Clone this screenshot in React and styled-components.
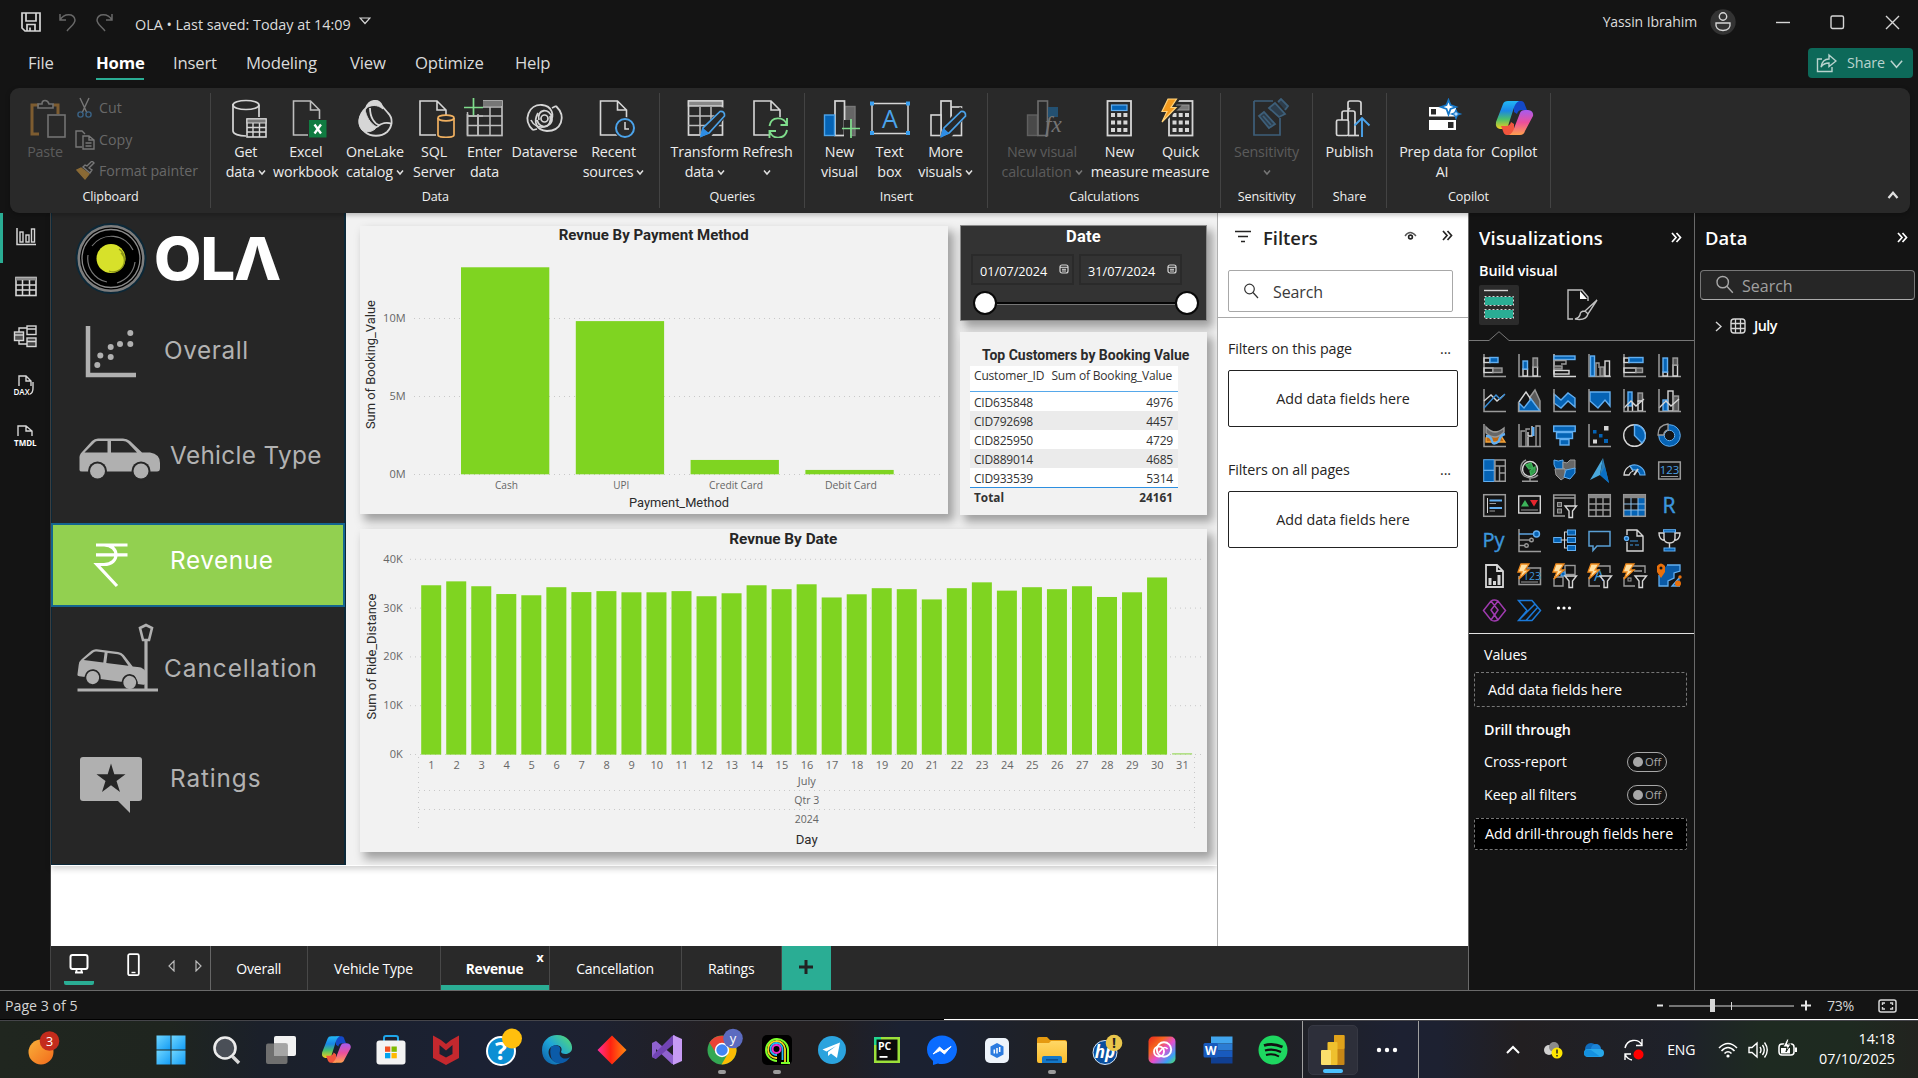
import React from 'react';
import styled, { createGlobalStyle, css } from 'styled-components';

const UI = '"Open Sans", "Noto Sans", sans-serif';
const DIN = 'Roboto, "Open Sans", sans-serif';
const TEAL = '#2aad94';

const Global = createGlobalStyle`
  * { box-sizing: border-box; }
  body { margin: 0; background: #141414; overflow: hidden; }
  svg { display: block; flex: none; }
`;

/* ---------- drawing helpers ---------- */
const R = (x, y, w, h, f = 'none', s = 'none', sw = 1.4, rx = 0) => (
  <rect x={x} y={y} width={w} height={h} fill={f} stroke={s} strokeWidth={sw} rx={rx} />
);
const P = (d, s = '#d0d0d0', f = 'none', sw = 1.4) => <path d={d} stroke={s} fill={f} strokeWidth={sw} />;
const C = (x, y, r, f = 'none', s = 'none', sw = 1.4) => <circle cx={x} cy={y} r={r} fill={f} stroke={s} strokeWidth={sw} />;
const T = (x, y, t, f, size, extra = {}) => (
  <text x={x} y={y} fill={f} fontSize={size} fontFamily={UI} {...extra}>{t}</text>
);

const W = '#d6d6d6';
const G = '#9a9a9a';
const B = '#0563b5';
const LB = '#62aef0';
const OR = '#f2a33a';

/* ---------- shell ---------- */
const Screen = styled.div`
  width: 1918px; height: 1078px; background: #141414; color: #e8e8e8;
  font: 14.3px/20px ${UI}; display: flex; flex-direction: column; overflow: hidden; white-space: nowrap;
`;
const TitleBar = styled.div`
  height: 44px; flex: none; display: flex; align-items: center; padding: 0 18px 0 21px; color: #dcdcdc;
`;
const QuickIcons = styled.div`display: flex; gap: 18px; width: 114px; padding-bottom: 1px;`;
const FileName = styled.div`font-size: 14.4px; letter-spacing: -0.02px; padding-top: 6px; margin-right: 8px;`;
const TitleSpacer = styled.div`flex: 1;`;
const UserName = styled.div`font-size: 14px; margin-right: 13px; letter-spacing: -0.1px;`;
const WindowButtons = styled.div`display: flex; gap: 40px; margin-left: 40px;`;

const MenuBar = styled.div`
  height: 44px; flex: none; display: flex; align-items: flex-start; padding: 4px 5px 0 28px;
`;
const MenuItem = styled.div`
  width: ${p => p.$w}px; margin-right: ${p => p.$gap}px; height: 32px; line-height: 30px; font-size: 16.7px;
  letter-spacing: -0.2px; color: ${p => (p.$on ? '#fff' : '#dadada')}; font-weight: ${p => (p.$on ? 700 : 400)};
  border-bottom: 2px solid ${p => (p.$on ? TEAL : 'transparent')};
`;
const ShareButton = styled.div`
  margin-left: auto; width: 105px; height: 30px; border-radius: 4px; background: #0d6959; color: #b9d3ce;
  display: flex; align-items: center; padding: 0 9px 0 8px; font-size: 14.3px; gap: 10px;
  svg + span { flex: 1; letter-spacing: -.1px; }
  span + svg { margin-left: -10px; }
`;

/* ---------- ribbon ---------- */
const Ribbon = styled.div`
  height: 125px; flex: none; margin: 0 8px 0 10px; background: #292929; border-radius: 9px; display: flex;
  position: relative; z-index: 2; box-shadow: 0 2px 5px rgba(0,0,0,.25);
`;
const Group = styled.div`
  width: ${p => p.$w}px; display: flex; flex-direction: column; padding-top: 10px; align-items: center; position: relative;
  &::after { content: ''; position: absolute; right: 0; top: 5px; height: 115px; width: 1px; background: #434343; }
`;
const GroupRow = styled.div`display: flex; align-self: stretch; padding-left: ${p => p.$pl || 0}px; height: 88px;`;
const GroupLabel = styled.div`font-size: 12.6px; line-height: 22px; color: #f0f0f0; letter-spacing: -0.1px;`;
const RibbonButton = styled.div`
  width: ${p => p.$w}px; display: flex; flex-direction: column; align-items: center; opacity: ${p => (p.$dim ? 0.42 : 1)};
  color: ${p => (p.$dim ? '#a0a0a0' : '#ececec')};
`;
const ButtonText = styled.div`
  margin-top: 4px; font-size: 14.3px; line-height: 20px; text-align: center; white-space: pre;
  display: flex; flex-direction: column; align-items: center; letter-spacing: -0.15px;
`;
const Line = styled.span`display: inline-flex; align-items: center; gap: 3px; height: 20px;`;
const ClipList = styled.div`display: flex; flex-direction: column; margin-left: 8px;`;
const ClipItem = styled.div`
  display: flex; align-items: center; gap: 4px; height: 32.5px; color: #686868; font-size: 14.2px;
  margin-top: ${p => p.$mt || 0}px;
`;
const Collapse = styled.div`margin-left: auto; align-self: flex-end; padding: 0 11px 12px 0;`;

const Caret = ({ c = '#e0e0e0', s = 8, up }) => (
  <svg width={s} height={s} viewBox="0 0 8 8">{P(up ? 'M1 6L4 2.5L7 6' : 'M1 2.5L4 6L7 2.5', c, 'none', s > 12 ? 0.8 : 1.5)}</svg>
);

const doc = (x, c = W) => P(`M${x} 3H${x + 17}L${x + 26} 12V37H${x}ZM${x + 17} 3V12H${x + 26}`, c, 'none', 1.6);

const icons = {
  get: <>{P('M9 6V33C9 36 15 38 22 38', W, 'none', 1.7)}<ellipse cx="22" cy="7" rx="13" ry="4.5" fill="none" stroke={W} strokeWidth="1.7" />{P('M35 7V19', W, 'none', 1.7)}{R(23, 21, 19, 18, '#292929', W, 1.6)}{R(23, 21, 19, 4, '#777', W, 1)}{P('M23 29.5H42M23 34H42M29 25V39M35.5 25V39', W, 'none', 1.4)}</>,
  excel: <>{doc(9.5, '#bdbdbd')}{R(24, 21, 19, 19, '#292929')}{R(25, 22, 17.5, 17.5, '#107c41')}{P('M30.5 26.5L37 35.5M37 26.5L30.5 35.5', '#fff', 'none', 2.3)}</>,
  lake: <>{P('M13 10C16 2 26 0 29 8L35 15C40 20 40 28 34 34C28 39 18 39 12 34C4 28 5 17 13 10Z', W, 'none', 1.8)}{P('M13 10C16 2 26 0 29 8L30 11C24 6 18 7 13 10Z', W, W, 1)}{P('M12 11C5 18 4 26 9 32C14 35 20 34 24 29C17 26 13 18 12 11Z', W, W, 1)}{P('M17 10C17 20 22 26 26 27M24 29C28 25 34 24 39 26', W, 'none', 1.8)}</>,
  sql: <>{doc(8)}{R(24, 17, 20, 23, '#292929')}{P('M26 20V37C26 40 42 40 42 37V20', '#f0b060', 'none', 1.7)}<ellipse cx="34" cy="20" rx="8" ry="2.8" fill="none" stroke="#f0b060" strokeWidth="1.7" /></>,
  enter: <>{R(4.5, 3, 34.5, 34.5, 'none', '#bdbdbd', 1.7)}{R(19, 3, 20, 5, '#777')}{P('M5 18H39M5 27.5H39M15 12V37M27 9V37M18 9H39', '#bdbdbd', 'none', 1.5)}{R(1, 0, 19, 16, '#292929', 'none')}{P('M10.5 0V19M1 9.5H20', '#7fdc8c', 'none', 1.7)}{P('M4.5 14V37M15 18V37M4.5 18H20', '#bdbdbd', 'none', 1.5)}</>,
  dv: <>{P('M16 22C13 11 27 9 29 20C30 30 13 33 8 22M10 32C-1 22 6 6 19 7C29 8 32 17 27 24', W, 'none', 1.8)}{P('M27 18C30 29 17 33 14 22M33 8C44 19 38 33 24 33C13 32 10 24 15 15M33 8L29 10M10 32L14 31', W, 'none', 1.8)}{C(21.5, 20.5, 3.5, 'none', W, 1.7)}</>,
  recent: <>{doc(8.5)}{C(33, 30, 11, '#292929')}{C(33, 30, 9, 'none', '#4ba3ea', 2)}{P('M33 24V31H37', W, 'none', 1.5)}</>,
  transform: <>{R(5.5, 3, 34, 34, 'none', W, 1.7)}{R(5.5, 3, 34, 5, '#888', W)}{P('M5 18H39M5 27.5H39M17 9V37M28 9V37', '#bdbdbd', 'none', 1.5)}{P('M17 40L22 28L39 9L46 14L27 40Z', 'none', '#292929')}{P('M18 38L20 30L37 13.5Q42 13 41.5 18L26 35Z', '#4ba3ea', '#292929', 1.7)}{P('M18 38.5L20 31L25 35Z', '#2e8ee6', '#2e8ee6')}</>,
  refresh: <>{doc(8)}{C(32, 30, 11, '#292929')}{P('M23.5 28C25 18 38 18 41 27M41 20V27H34.5M41 32C39 42 26 42 23.5 33M23.5 40V33H30', '#7fdc8c', 'none', 1.9)}</>,
  newVisual: <>{R(27, 8.5, 10, 29, '#666', '#777')}{R(17, 3, 9.5, 34.5, '#292929', W, 1.7)}{R(6.5, 17, 10, 20.5, B, '#4ba3ea')}{R(26, 22, 6, 17, '#292929')}{P('M33 21V40M24 30.5H42', '#7fdc8c', 'none', 1.7)}</>,
  textBox: <>{R(4, 5.5, 36, 30, 'none', W, 1.5)}{[[2, 3.5], [38, 3.5], [2, 33], [38, 33]].map(([x, y], i) => <rect key={i} x={x} y={y} width="4" height="4" fill="#3a9ff0" />)}{T(22, 30, 'A', '#4ba3ea', 25, { textAnchor: 'middle' })}</>,
  more: <>{R(27, 9, 10.5, 28.5, 'none', W, 1.6)}{R(17, 3, 10, 34.5, '#292929', W, 1.7)}{R(7, 17, 10, 20.5, '#292929', W, 1.6)}{P('M16 40L19 28L36 9L44 14L27 40Z', 'none', '#292929')}{P('M17.5 38L20 30L37 13.5Q42 13 41.5 18L25 35Z', '#4ba3ea', '#292929', 1.7)}{P('M17.5 38.5L19.5 31L24 35Z', '#2e8ee6', '#2e8ee6')}</>,
  calc: <>{R(7.5, 17, 10, 20.5, '#777', '#aaa')}{R(18, 3, 9.5, 34.5, 'none', '#ccc', 1.6)}{R(28, 9, 10, 10, '#1c87d4')}{T(25, 34, 'fx', '#ddd', 23, { fontFamily: '"Liberation Serif", serif', fontStyle: 'italic' })}</>,
  measure: <>{R(9.5, 3, 23.5, 34.5, 'none', W, 1.8)}{R(13.5, 7, 15.5, 5.5, B, '#62aef0', 1.2)}{[15, 22.5, 30].flatMap(y => [13, 19.2, 25.4].map(x => <rect key={x + '-' + y} x={x} y={y} width="4" height="4" fill={W} />))}</>,
  quick: <>{R(10, 3, 23.5, 34.5, 'none', W, 1.8)}{R(16, 7, 14, 5, '#777', '#999', 1)}{[15, 22.5, 30].flatMap(y => [13.5, 19.7, 26].map(x => <rect key={x + '-' + y} x={x} y={y} width="4" height="4" fill={W} />))}{P('M8 0H20L14 9H19L2 26L7 14H0Z', '#292929', '#292929', 3)}{P('M9 1H17.5L12 9.5H17L3 24L8 13.5H3Z', '#ffd27a', '#f39a1e', 1.2)}</>,
  sens: <>{P('M9 3H28M35 20V37H9V3', '#5aa9e8', 'none', 1.7)}{P('M14 18L19 14L30 26L24 30ZM18 18L26 27M24 10L30 5L40 16L34 19ZM33 4L36 1L43 8L40 12', '#5aa9e8', '#33597a', 1.8)}</>,
  publish: <>{P('M20 38V12L22 10M20 12V5Q20 3 22 3H30Q33 3 33 5V17M14 22V15Q14 13 16 13H25Q27 13 27 15V37', W, 'none', 1.7)}{R(8.5, 22, 12, 15.5, '#292929', W, 1.7, 1.5)}{P('M20 37.5H31', W, 'none', 1.7)}{P('M34 39V20M26.5 27.5L34 20L41.5 27.5', '#4ba3ea', 'none', 1.9)}</>,
  prep: <>{R(9, 9, 27, 9.5, '#fff')}{R(11, 11, 5, 5.5, '#292929')}{R(9, 22, 27, 10, '#fff')}{R(28, 24, 5.5, 6, '#292929')}{P('M28.5 2L30.5 7L36 9L30.5 11L28.5 16.5L26.5 11L21 9L26.5 7Z', '#1677c8', '#fff', 1.8)}{P('M36 12L37.3 14.8L40.5 16L37.3 17.2L36 20.5L34.7 17.2L31.5 16L34.7 14.8Z', '#1677c8', '#bfe0ff', 1.3)}</>,
};

const Copilot = ({ w = 44, h = 40, id }) => (
  <svg width={w} height={h} viewBox="0 0 44 40">
    <defs>
      <linearGradient id={id + 'a'} x1="0" y1="0" x2="0" y2="1"><stop offset="0" stopColor="#22b8f5" /><stop offset=".35" stopColor="#1a86e6" /><stop offset=".65" stopColor="#4bbf6a" /><stop offset="1" stopColor="#f5cf1c" /></linearGradient>
      <linearGradient id={id + 'b'} x1="0" y1="0" x2="0" y2="1"><stop offset="0" stopColor="#a55cf0" /><stop offset=".5" stopColor="#ec4f9b" /><stop offset="1" stopColor="#ffa04d" /></linearGradient>
    </defs>
    {P('M22 3H29Q32 3 33 7L35 12H30Q26 12 25 16L22 14Z', 'none', '#1449c8')}
    {P('M11 6Q12 3 16 3H27Q23 5 21.5 11L16 28Q15 31 11 31H8Q3 30 4 24Z', 'none', `url(#${id}a)`)}
    {P('M22 37H15Q12 37 11 33L9 28H14Q18 28 19 24L22 26Z', 'none', '#f2553d')}
    {P('M33 33Q32 37 28 37H17Q21 35 22.5 29L28 15Q29 12 33 12H36Q42 13 41 18Z', 'none', `url(#${id}b)`)}
  </svg>
);

const RButton = ({ w, icon, a, b, caret, dim }) => (
  <RibbonButton $w={w} $dim={dim}>
    {icon === 'copilot' ? <Copilot id="rc" /> : <svg width="44" height="40" viewBox="0 0 44 40">{icons[icon]}</svg>}
    <ButtonText>
      <Line>{a}</Line>
      {(b || caret) && <Line>{b}{caret && <Caret />}</Line>}
    </ButtonText>
  </RibbonButton>
);

/* ---------- main area ---------- */
const Main = styled.div`height: 777px; flex: none; display: flex;`;
const Rail = styled.div`
  width: 51px; border-right: 1px solid #444; display: flex; flex-direction: column; align-items: center;
`;
const RailItem = styled.div`
  width: 50px; height: 50px; display: flex; align-items: center; justify-content: center;
  border-left: 3px solid ${p => (p.$on ? TEAL : 'transparent')}; padding: 0 2px 3px 0;
`;
const Center = styled.div`width: 1417px; display: flex; flex-direction: column;`;
const Work = styled.div`height: 733px; display: flex; background: #fff;`;
const Canvas = styled.div`width: 1166px; height: 733px; background: #fff;`;
const Page = styled.div`
  display: flex; height: 653px; border-bottom: 1px solid #fff; box-shadow: 0 3px 6px rgba(0,0,0,.18);
`;
const Nav = styled.div`width: 295px; background: #262626; border: 1px solid #0c2838; border-top: 0; border-right-width: 2px; display: flex; flex-direction: column;`;
const LogoRow = styled.div`height: 91px; display: flex; align-items: center; padding-left: 23px;`;
const LogoText = styled.div`
  font: 800 59px/60px Inter, sans-serif; color: #fff; letter-spacing: -1px; margin-left: 7px; width: 126px; padding-top: 1px;
  transform-origin: left; transform: scaleX(1.04);
`;
const NavItem = styled.div`
  height: ${p => p.$h}px; display: flex; align-items: center; color: #b2b2b2; flex: none;
  ${p => p.$on && css`background: #92d050; color: #fff; border: 2px solid #14658f; margin: 0 -1px 0 -1px;`}
`;
const NavText = styled.div`
  font: 400 24.3px/30px Inter, sans-serif; letter-spacing: ${p => p.$ls || 0}px; margin-top: ${p => p.$mt || 0}px; margin-left: -1px;
`;

const Report = styled.div`
  width: 871px; background: #f2f2f2; padding: 12px 9px 0 14px; display: flex; flex-direction: column; gap: 14px;
`;
const TopRow = styled.div`display: flex; gap: 12px; height: 290px;`;
const SideCol = styled.div`display: flex; flex-direction: column; gap: 11px;`;
const Card = styled.div`
  width: ${p => p.$w}px; height: ${p => p.$h}px; margin-top: ${p => p.$mt || 0}px; flex: none;
  background: ${p => (p.$dark ? '#333' : '#f2f2f2')}; box-shadow: 5px 6px 9px 1px rgba(0,0,0,.34);
  ${p => p.$dark && 'border: 1px solid #8a8a8a; color: #fff;'}
`;
const DateTitle = styled.div`font: 700 16.5px/20px ${DIN}; text-align: center; letter-spacing: .2px; padding-top: 1px;`;
const DateInputs = styled.div`display: flex; gap: 5px; padding: 7px 0 0 10px;`;
const DateInput = styled.div`
  width: 103px; height: 31px; border: 2px solid #2a2a2a; display: flex; align-items: center; padding: 2px 3px 0 7px;
  justify-content: space-between; font-size: 12.7px; letter-spacing: 0;
  svg { margin-top: -3px; }
`;
const Slider = styled.div`display: flex; align-items: center; padding: 6px 7px 0 12px;`;
const Knob = styled.div`width: 24px; height: 24px; border-radius: 50%; background: #fff; border: 2px solid #0a0a0a; flex: none;`;
const Track = styled.div`flex: 1; height: 3px; background: #050505; border-bottom: 1px solid #777;`;

const TableTitle = styled.div`font: 700 14px/18px ${DIN}; color: #2b2b2b; padding: 14px 0 0 22px; letter-spacing: -.02px;`;
const Grid = styled.div`width: 208px; margin: 2px 0 0 10px; font-size: 12px; color: #333;`;
const GridHead = styled.div`
  height: 26px; background: #fff; border-bottom: 1.5px solid #56a8ea; display: flex; justify-content: space-between;
  padding: 0 6px 0 4px; line-height: 20px; font-size: 12px; letter-spacing: -.18px;
`;
const GridRow = styled.div`
  height: 19px; line-height: 21px; display: flex; justify-content: space-between; padding: 0 5px 0 4px; letter-spacing: -.2px;
  background: ${p => (p.$alt ? '#ebebeb' : '#fff')};
`;
const GridTotal = styled.div`
  height: 20px; line-height: 19px; border-top: 1.5px solid #2d8fe0; font-weight: 700; display: flex; justify-content: space-between; padding: 0 5px 0 4px;
  font-size: 11.8px;
`;

/* ---------- panes ---------- */
const FilterPane = styled.div`
  width: 251px; border-left: 1px solid #b0b0b0; background: #fff; color: #252423; display: flex; flex-direction: column;
`;
const PaneHead = styled.div`height: 57px; display: flex; align-items: center; padding: 0 ${p => p.$r}px 8px ${p => p.$l}px;`;
const PaneTitle = styled.div`font-weight: 600; font-size: 18.4px; line-height: 26px; letter-spacing: ${p => p.$ls || 0}px; flex: 1;`;
const HeadIcons = styled.div`display: flex; align-items: center; padding-bottom: 4px;`;
const FilterSearch = styled.div`
  width: 225px; height: 42px; margin-left: 10px; border: 1px solid #a8a8a8; border-radius: 2px; display: flex; align-items: center;
  padding: 2px 0 0 14px; gap: 14px; font-size: 16px; color: #3a3a3a; letter-spacing: -.1px;
  svg { margin-top: -3px; }
`;
const FilterRule = styled.div`height: 1px; background: #a8a8a8; margin: 5px 0 0;`;
const FilterLabel = styled.div`
  height: 22px; margin-top: ${p => p.$mt}px; padding: 0 17px 0 10px; display: flex; justify-content: space-between;
  font-size: 14.3px; letter-spacing: -.08px;
`;
const FilterDrop = styled.div`
  width: 230px; height: 57px; margin: 9px 0 0 10px; border: 1px solid #222; border-radius: 2px; display: flex; align-items: center;
  justify-content: center; font-size: 14.3px;
`;

const VizPane = styled.div`width: 226px; border-left: 1px solid #6a6a6a; color: #fff; display: flex; flex-direction: column; flex: none;`;
const DataPane = styled(VizPane)`width: 224px;`;
const BuildWrap = styled.div`height: 61px; display: flex; flex-direction: column;`;
const BuildLabel = styled.div`font-weight: 600; font-size: 14.4px; padding-left: 10px; line-height: 20px; margin-top: -9px; height: 24px; letter-spacing: -.1px;`;
const BuildTabs = styled.div`display: flex; gap: 43px; padding-left: 10px; height: 46px;`;
const BuildTab = styled.div`width: 40px; height: 40px; background: ${p => (p.$on ? '#2b2b2b' : 'transparent')}; display: flex; align-items: center; justify-content: center; border-radius: 2px;`;
const VizGrid = styled.div`
  display: grid; grid-template-columns: repeat(6, 23px); column-gap: 12px; row-gap: 12px; grid-auto-rows: 23px; padding: 13px 0 0 14px; height: 292px;
`;
const Rule = styled.div`height: 1px; background: #e2e2e2; flex: none;`;
const FieldLabel = styled.div`padding-left: 15px; height: 20px; margin-top: ${p => p.$mt}px; font-weight: ${p => (p.$b ? 600 : 400)}; font-size: 14.3px; letter-spacing: -.1px;`;
const FieldWell = styled.div`
  width: 213px; height: ${p => p.$h}px; margin: ${p => p.$mt}px 0 0 5px; border: 1px dashed #757575; border-radius: 2px; padding-left: ${p => p.$pl}px;
  display: flex; align-items: center; background: ${p => (p.$black ? '#000' : 'transparent')}; font-size: 14.35px;
`;
const ToggleRow = styled.div`display: flex; align-items: center; justify-content: space-between; padding: 0 27px 0 15px; height: 20px; margin-top: ${p => p.$mt}px; letter-spacing: -.1px;`;
const Toggle = styled.div`
  width: 40px; height: 20px; border: 1px solid #a8a8a8; border-radius: 10px; display: flex; align-items: center; gap: 2px; padding-left: 5px;
  font-size: 11.2px; color: #a8a8a8; letter-spacing: 0;
  &::before { content: ''; width: 10px; height: 10px; border-radius: 50%; background: #a8a8a8; }
`;
const DataSearch = styled.div`
  width: 215px; height: 30px; margin-left: 5px; border: 1px solid #777; border-bottom-color: #aaa; border-radius: 4px; background: #262626; color: #a0a0a0;
  display: flex; align-items: center; padding: 1px 0 0 14px; gap: 8px; font-size: 16px;
  svg { margin-top: -2px; }
`;
const TreeItem = styled.div`display: flex; align-items: center; padding-left: 20px; margin-top: 16px; gap: 8px; font-size: 14.3px; font-weight: 600; letter-spacing: -.5px;`;

/* ---------- tabs and status ---------- */
const TabBar = styled.div`height: 44px; background: #292929; display: flex;`;
const ViewIcons = styled.div`width: 160px; border-right: 1px solid #666; display: flex; padding-left: 13px;`;
const ViewIcon = styled.div`
  width: 30px; height: 39px; display: flex; align-items: center; justify-content: center; margin-right: ${p => p.$mr || 0}px;
  padding-top: ${p => p.$pt || 0}px;
  border-bottom: 4px solid ${p => (p.$on ? TEAL : 'transparent')}; border-radius: 2px;
`;
const Tab = styled.div`
  width: ${p => p.$w}px; line-height: 46px; text-align: center; color: #fff; border-right: 1px solid #484848; font-size: 14px; letter-spacing: -.2px;
  position: relative; font-weight: ${p => (p.$on ? 700 : 400)};
  ${p => p.$on && `font-size: 13.7px; box-shadow: inset 0 -5px 0 ${TEAL};`}
`;
const TabClose = styled.span`position: absolute; right: 5px; top: 1px; line-height: 22px; font-size: 12.5px;`;
const AddTab = styled.div`width: 49px; background: ${TEAL}; display: flex; align-items: center; justify-content: center; padding: 0 1px 3px 0;`;
const StatusBar = styled.div`height: 29px; flex: none; border-top: 1px solid #6a6a6a; display: flex; align-items: center; padding: 2px 21px 0 5px; color: #d4d4d4; font-size: 14.2px; letter-spacing: 0;`;
const StatusSpacer = styled.div`flex: 1;`;
const Percent = styled.div`margin: 0 24px 0 15px; font-size: 14.2px; letter-spacing: -.3px;`;

/* ---------- taskbar ---------- */
const TopEdge = styled.div`height: 2px; flex: none; border-bottom: 1px solid #45454a; background: linear-gradient(90deg, #000 944px, #fff 944px);`;
const Taskbar = styled.div`
  height: 57px; flex: none; display: flex; align-items: center;
  background: linear-gradient(90deg, #20261f 0, #1f251f 170px, #1b202a 260px, #1b2133 480px, #1d2130 600px, #231f21 720px, #221f21 830px, #1b2131 900px, #1b2130 960px, #202124 1060px, #202125 1280px, #1d2132 1400px, #1d2131 1440px, #221f21 1520px, #1e212a 1680px, #1e2a21 1760px, #1e2a20 1850px, #22231f 1918px);
`;
const Widgets = styled.div`width: 143.5px; padding-left: 26px;`;
const AppCell = styled.div`width: 55.09px; height: 57px; display: flex; align-items: center; justify-content: center; position: relative; flex: none;`;
const RunningDot = styled.div`position: absolute; bottom: 4px; width: 8px; height: 4px; border-radius: 2px; background: #9b9b9b;`;
const ActiveArea = styled.div`width: 117px; height: 57px; margin-left: 2px; border-left: 1px solid #a0a0a0; border-right: 1px solid #a0a0a0; display: flex; align-items: center; padding-left: 5px; gap: 18px;`;
const ActiveApp = styled.div`width: 50px; height: 50px; border-radius: 5px; background: #2d2f3a; border: 1px solid #363843; display: flex; align-items: center; justify-content: center; position: relative;
  &::after { content: ''; position: absolute; bottom: 1px; width: 20px; height: 4px; border-radius: 2px; background: #4cc2ff; }
`;
const Tray = styled.div`flex: 1; display: flex; align-items: center; padding: 0 23px 0 86px; color: #fff;`;
const TrayIcon = styled.div`width: ${p => p.$w}px; margin-right: ${p => p.$mr}px;`;
const Lang = styled.div`font-size: 14px; width: 51px; letter-spacing: -.1px;`;
const Clock = styled.div`margin-left: auto; text-align: right; font-size: 14.3px; line-height: 20px; letter-spacing: 0; padding-bottom: 1px;`;

/* ---------- charts ---------- */
const Txt = ({ x, y, children, w, size = 11, fill = '#666', anchor = 'middle', weight = 400, family = UI, rotate }) => (
  <text
    x={x} y={y} fontSize={size} fill={fill} textAnchor={anchor} fontWeight={weight} fontFamily={family}
    dominantBaseline="central" textLength={w} lengthAdjust="spacingAndGlyphs"
    transform={rotate ? `rotate(-90 ${x} ${y})` : undefined}
  >{children}</text>
);
const Dots = ({ x1, x2, y1, y2 }) => <line x1={x1} x2={x2} y1={y1} y2={y2} stroke="#c8c8c8" strokeWidth="1" strokeDasharray="1 4" />;

const payments = [['Cash', 13.27, 23], ['UPI', 9.82, 16], ['Credit Card', 0.92, 54], ['Debit Card', 0.28, 52]];
const PaymentChart = () => (
  <svg width="588" height="288" viewBox="0 0 588 288">
    <Txt x={293.7} y={9.3} w={190} size={15.2} weight={700} fill="#262626" family={DIN}>Revnue By Payment Method</Txt>
    {[0, 5, 10].map(v => (
      <g key={v}>
        <Dots x1={54} x2={581} y1={248.5 - v * 15.6} y2={248.5 - v * 15.6} />
        <Txt x={45.6} y={247 - v * 15.6} anchor="end">{v}M</Txt>
      </g>
    ))}
    {payments.map(([n, v, w], i) => (
      <g key={n}>
        <rect x={101 + i * 114.8} y={248.3 - v * 15.6} width="88.3" height={v * 15.6} fill="#7fd421" />
        <Txt x={146.5 + i * 114.8} y={258.5} w={w}>{n}</Txt>
      </g>
    ))}
    <Txt x={319} y={276.3} w={100} size={13} fill="#2b2b2b" family={DIN}>Payment_Method</Txt>
    <Txt x={11} y={138.6} w={129} size={13} fill="#2b2b2b" family={DIN} rotate>Sum of Booking_Value</Txt>
  </svg>
);

const daily = [34.7, 35.5, 34.5, 32.9, 32.65, 34.3, 33.3, 33.5, 33.26, 33.26, 33.5, 32.45, 33.06, 34.7, 33.9, 34.9, 32.2, 32.85, 34.1, 33.9, 31.8, 34.1, 35.3, 33.6, 34.3, 33.9, 34.5, 32.3, 33.26, 36.3, 0.3];
const DateChart = () => (
  <svg width="847" height="323" viewBox="0 0 847 323">
    <Txt x={423.3} y={9.7} w={108} size={15.2} weight={700} fill="#262626" family={DIN}>Revnue By Date</Txt>
    {[0, 10, 20, 30, 40].map(v => (
      <g key={v}>
        <Dots x1={50} x2={841} y1={225.5 - v * 4.88} y2={225.5 - v * 4.88} />
        <Txt x={42.7} y={224.5 - v * 4.88} anchor="end">{v}K</Txt>
      </g>
    ))}
    {daily.map((v, i) => (
      <g key={i}>
        <rect x={61.2 + i * 25.03} y={225.6 - v * 4.88} width="20" height={v * 4.88} fill={i === 30 ? '#a9dd77' : '#7fd421'} />
        <Txt x={71.5 + i * 25.03} y={235}>{i + 1}</Txt>
      </g>
    ))}
    <Dots x1={59} x2={835} y1={261.5} y2={261.5} />
    <Dots x1={59} x2={835} y1={280.5} y2={280.5} />
    <Dots x1={58.5} x2={58.5} y1={228} y2={300} />
    <Dots x1={834.5} x2={834.5} y1={228} y2={300} />
    <Txt x={446.7} y={251} w={18}>July</Txt>
    <Txt x={446.7} y={270} w={25}>Qtr 3</Txt>
    <Txt x={446.7} y={289} w={24}>2024</Txt>
    <Txt x={446.7} y={310.5} w={22} size={13} fill="#2b2b2b" family={DIN}>Day</Txt>
    <Txt x={11} y={127.5} w={126} size={13} fill="#2b2b2b" family={DIN} rotate>Sum of Ride_Distance</Txt>
  </svg>
);

/* ---------- navigation drawings ---------- */
const N = '#b0b0b0';
const Car = () => (
  <>
    {P('M79.5 470V459Q79 455 82 452L92 441Q94.5 438.5 98 438.5H123Q127 438.5 130 441L142 452.5H150Q160 454 160 463V468Q160 471.5 157 471.5H82Q79.5 471.5 79.5 470Z', 'none', N)}
    {P('M84.5 452.5L95 442Q96 441 98 441H107.5V452.5Z', 'none', '#262626')}
    {P('M111 441H123Q126 441 128 443L137 452.5H111Z', 'none', '#262626')}
    {C(97.5, 471, 9.5, '#262626')}{C(97.5, 471, 7.5, N)}{C(141, 471, 9.5, '#262626')}{C(141, 471, 7.5, N)}
  </>
);
const Medallion = () => (
  <svg width="72" height="73" viewBox="0 0 72 73">
    {C(36, 36.5, 34.5, '#7d7d7d', '#0c2838', 2)}{C(36, 36.5, 31, '#000')}{C(36, 36.5, 29, 'none', '#8a8a8a', 1.3)}
    <path d="M17 24A24 24 0 0 1 58 28M60 40A25 25 0 0 1 42 61M13 33A24 24 0 0 0 32 60" stroke="#777" fill="none" strokeWidth="1.2" />
    {C(36, 36.5, 14.5, '#d7e12a')}
    <path d="M44 27A13 13 0 0 1 43 49M46 31A11 11 0 0 1 34 49" stroke="#8b9418" fill="none" strokeWidth="1.2" />
  </svg>
);

/* ---------- visual gallery ---------- */
const axis = P('M1 0V22.5H23', G, 'none', 1.5);
const bolt = <>{P('M3 0H11L7 6H11L1 15L4 8H0Z', '#f08a1c', '#ffe0a3', 1.3)}</>;
const funnel = P('M12 12H23.5L19.5 17V23.5H16V17Z', W, '#141414', 1.4);
const gallery = [
  <>{axis}{R(1, 4, 6, 4.5, 'none', W)}{R(7, 3.5, 8, 5, B, LB)}{R(1, 14, 9, 4.5, 'none', W)}{R(10, 14, 9, 4.5, '#555', G)}</>,
  <>{axis}{R(5, 15, 4.5, 7, 'none', W)}{R(5, 7, 4.5, 8, B, LB)}{R(15, 13, 4.5, 9, 'none', W)}{R(15, 4, 4.5, 9, '#555', G)}</>,
  <>{P('M1 0V22.5H23', W)}{R(1, 2, 21, 3.5, B, LB)}{P('M1 6.5H13V10H8', G)}{R(1, 12, 8, 3, '#555', G)}{R(1, 16.5, 15, 3.5, 'none', W)}</>,
  <>{axis}{R(2.5, 2, 4, 20, B, LB)}{P('M8 22V9H11V14', G)}{R(12, 13, 4, 9, '#555', G)}{R(17, 7, 4.5, 15, 'none', W)}</>,
  <>{axis}{R(1, 4, 5, 4.5, 'none', W)}{R(6, 3.5, 14, 5, B, LB)}{R(1, 14, 12, 4.5, 'none', W)}{R(13, 14, 6.5, 4.5, '#555', G)}</>,
  <>{axis}{R(5, 18, 4.5, 4, 'none', W)}{R(5, 4, 4.5, 14, B, LB)}{R(15, 11, 4.5, 11, 'none', W)}{R(15, 4, 4.5, 7, '#555', G)}</>,
  <>{axis}{P('M1 12L8 6L14 12L21 6', W)}{P('M1 19L13 6L17 10L22 5', '#3a8fd8')}</>,
  <>{P('M12 8L17 1L22 12V22H12Z', G, '#5a5a5a')}{P('M1 13L8 3L16 15', W)}{P('M1 22V14L6 19L13 10L22 22Z', LB, B)}{P('M0.5 13V22.5H23', G)}</>,
  <>{P('M1 5L8 11L15 4L22 9V18L15 12L8 19L1 14Z', LB, B)}{axis}</>,
  <>{P('M2 3H22V17L17 11L10 19L2 12Z', LB, B)}{axis}</>,
  <>{R(5, 3, 4, 14, B, LB)}{R(15, 4, 4.5, 8, '#555', G)}{R(15, 12, 4.5, 10, 'none', W)}{P('M1 19L8 12L13 17L21 10M5 22V17M9.5 22V14', W)}{axis}</>,
  <>{R(10, 2, 5, 20, 'none', W)}{R(5, 11, 4.5, 11, B, LB)}{R(15.5, 7, 5, 15, '#555', G)}{P('M1 19L8 12L13 17L21 10', W)}{axis}</>,
  <>{P('M3 14Q8 8 12 8T22 18H3Z', OR, '#c06a12')}{P('M3 3Q8 8 12 8T21 4V8Q16 13 12 13T3 9Z', G, '#666')}{P('M3 12Q8 12 9 17T16 17Q17 11 22 10', LB, 'none', 2.4)}{axis}</>,
  <>{P('M3 22V7H7M8 22V5H12M18 22V2H22V22', G)}{P('M10 8V12H14V2', W)}{R(14, 3, 2.5, 9, LB)}{P('M10 13V22', W)}{axis}</>,
  <>{R(0.7, 2, 21.5, 5.5, B, LB)}{R(3.5, 8.5, 16, 6, B, LB)}{R(7, 15.5, 9, 5.5, B, LB)}</>,
  <>{axis}{R(5, 6, 3.5, 3.5, B)}{R(16, 2, 4.5, 4.5, W)}{R(11, 10, 3.5, 3.5, B)}{R(16, 15, 4, 4, B)}{R(5, 15.5, 4, 4, W)}</>,
  <>{C(11.5, 11.5, 10.8, 'none', W)}{P('M11.5 1V11.5L19 19A10.5 10.5 0 0 0 11.5 1Z', LB, B)}</>,
  <>{C(11.5, 11.5, 8, 'none', B, 5.5)}{C(11.5, 11.5, 10.8, 'none', LB, 1)}{C(11.5, 11.5, 5.2, 'none', LB, 1)}{P('M10 0V6Q6 7 5.7 11H0Q0 1 10 0Z', G, '#141414', 1.3)}</>,
  <>{R(0.7, 0.7, 10.5, 10.5, B, LB, 1)}{R(0.7, 11.5, 10.5, 11, B, LB, 1)}{P('M12 1H22.3V22.3H12ZM12 7H22M16.5 7V22M16.5 14H22', G)}</>,
  <>{C(12, 10, 7.5, 'none', W)}{P('M8 6L13 4L15 9L11 10ZM12 12L17 8V13L13 16Z', '#3fae58', '#2f9e49')}{P('M8 1Q2 4 3 11T12 19Q17 19 20 16M12 19V22M4 22.3H20', G)}</>,
  <>{P('M1 1Q5 3 10 1V10H3Q0 6 1 1Z', LB, B, 1)}{P('M10 3L14 4L17 1H22V10L13 11L10 9Z', G, '#666', 1)}{P('M2 10H12V18L8 21L3 16Z', G, '#666', 1)}{P('M13 11L22 9V14L17 20L11 18Z', LB, B, 1)}</>,
  <>{P('M15 -1L2 21L12 16Z', 'none', '#4aa8dc')}{P('M15 -1L21 24L12 16Z', 'none', '#2a7fb8')}{P('M12 16L21 24L17 8Z', 'none', '#0a6fc4')}</>,
  <>{P('M1 16A10.5 10.5 0 0 1 7 7L10 12Q7 13 6 16Z', W, 'none', 1.3)}{P('M7 7A10.5 10.5 0 0 1 22 16H17A6 6 0 0 0 10 11Z', LB, B, 1.2)}{P('M11 16L15 10', W, 'none', 2)}</>,
  <>{R(0.7, 3, 21.6, 17, 'none', G, 1.5)}{T(11.5, 15, '123', '#4a9fe0', 11.5, { textAnchor: 'middle' })}{P('M3 17.5H20', G, 'none', 1)}</>,
  <>{R(0.7, 0.7, 21.6, 21.6, 'none', G, 1.5)}{P('M4.5 4V19', W, 'none', 1)}{P('M6.5 6.5H19M6.5 14H19', LB, 'none', 2)}{P('M6.5 9.5H13M6.5 17H12', G, 'none', 1)}</>,
  <>{R(0.7, 2, 21.6, 17, 'none', W, 1.4)}{P('M3 12.5L7 6L11 12.5Z', 'none', '#3cb45a')}{P('M12 6H20L16 12.5Z', 'none', '#e8262d')}{P('M3 16H20', G, 'none', 1)}</>,
  <>{P('M22 12V1H0.7V22H12M1 4H22', G, 'none', 1.5)}{R(4.5, 8.5, 4, 4, '#555', G, 1)}{R(4.5, 15, 4, 4, '#555', G, 1)}{funnel}</>,
  <>{R(0.7, 0.7, 21.6, 21.6, 'none', G, 1.5)}{R(0.7, 0.7, 21.6, 3.5, '#888')}{P('M1 10H22M1 16H22M8 4V22M15 4V22', G)}</>,
  <>{R(0.7, 4, 21.6, 18, B)}{R(1, 4, 14, 12, '#141414')}{R(0.7, 0.7, 21.6, 21.6, 'none', G, 1.5)}{R(0.7, 0.7, 21.6, 3.5, '#888')}{P('M1 10H22M1 16H22M8 4V22M15 4V22', '#8ec0ea', 'none', 1)}</>,
  T(4.5, 19, 'R', '#3c96dd', 21, { stroke: '#3c96dd', strokeWidth: 0.5 }),
  T(-0.5, 18, 'Py', '#3c96dd', 20, { stroke: '#3c96dd', strokeWidth: 0.4 }),
  <>{axis}{P('M1 5H16', LB)}{C(18.5, 5, 3, B, LB)}{P('M1 11H12', G)}{C(13.5, 11, 1.8, 'none', G)}{P('M1 16.5H7', G)}{C(8.5, 16.5, 1.8, 'none', G)}</>,
  <>{R(0.7, 8.5, 7.5, 5, B, LB, 1)}{R(14.5, 1, 8, 5, B, LB, 1)}{R(14.5, 8.5, 8, 5, B, LB, 1)}{R(14.5, 16.5, 8, 5, B, LB, 1)}{P('M8 11H14M14 3H11.5V19H14', W, 'none', 1.1)}</>,
  P('M1 2.5H22V17H9L5 21.5V17H1Z', '#5a9fd4', 'none', 1.5),
  <>{P('M4 6V1H14L20 7V22H4V13M14 1V7H20', W, 'none', 1.4)}{C(3.5, 9.5, 2, B, LB)}{P('M7 12H15M7 16H10M12 16H16', '#3c96dd', 'none', 1.2)}</>,
  <>{P('M6 2V9Q6 14 11.5 14T17 9V2ZM6 4H1Q1 11 7 11.5M17 4H22Q22 11 16 11.5M11.5 14V19', W, 'none', 1.4)}{R(5.5, 0.7, 12, 2.3, B, LB, 1)}{R(6, 19, 11, 3, B, LB, 1)}</>,
  <>{P('M3 1H14L20 7V23H3ZM14 1V7H20', W, 'none', 1.8)}{R(5.5, 14, 3, 7, W)}{R(10, 17, 3, 4, W)}{R(14.5, 11, 3, 10, W)}</>,
  <>{P('M9 4H22.5V20.5H1V12', G, 'none', 1.5)}{T(5, 16, '123', '#3c96dd', 10.5)}{P('M3 18H20', G, 'none', 1)}{bolt}</>,
  <>{R(12, 1.5, 10, 9, 'none', G, 1.4)}{P('M1 14V22H10V13H1', G, 'none', 1.4)}{R(8, 8, 4, 4, B, LB, 1)}{funnel}{bolt}</>,
  <>{P('M10 2H22V9M1 13V22H12', G, 'none', 1.4)}{T(6, 17, 'A', '#3c96dd', 16)}{funnel}{bolt}</>,
  <>{P('M10 2H22V9M1 13V22H12M11 7H19', G, 'none', 1.4)}{R(5, 14, 3, 3, 'none', G, 1)}{funnel}{bolt}</>,
  <>{P('M9 1H22V7L16 9V14L10 17V22H1V11M22 13L14 22H22', LB, '#0a5aa6', 1.3)}{P('M-1 2Q3 -3 7 2V8L3 14L-1 8Z', 'none', '#e8700c')}{C(3, 4, 1.5, '#141414')}{C(20, 19.5, 3, '#e8700c')}{C(22, 13, 1.7, '#e8700c')}</>,
  P('M0.5 11.5L8 2Q11 0 15 2L22.5 11.5L15 21Q11 23 8 21ZM8 2L15 11L8 21M15 2L8 11L15 21', '#a03bb0', 'none', 1.5),
  P('M0.5 1.5H14L22.5 11.5L14 21.5H0.5L9 11.5ZM1 21L17 5M8 21.5L20 8M0.5 1.5L9 11.5', '#1b79d8', 'none', 1.5),
  <>{C(5.5, 9, 1.6, '#fff')}{C(11, 9, 1.6, '#fff')}{C(16.5, 9, 1.6, '#fff')}</>,
];

const Chevrons = ({ c = '#fff' }) => (
  <svg width="11" height="11" viewBox="0 0 11 11">{P('M1 1L5 5.5L1 10M5.5 1L9.5 5.5L5.5 10', c, 'none', 1.7)}</svg>
);
const Magnifier = ({ c, s = 16 }) => (
  <svg width={s} height={s} viewBox="0 0 16 16">{C(6.5, 6, 4.8, 'none', c, 1.2)}{P('M10 9.5L15 15', c, 'none', 1.2)}</svg>
);

/* ---------- taskbar drawings (30 x 30) ---------- */
const gradients = (
  <defs>
    <linearGradient id="edge" x1="0" y1="1" x2="1" y2="0"><stop offset="0" stopColor="#0c59a4" /><stop offset=".5" stopColor="#1ea5d8" /><stop offset="1" stopColor="#5be06a" /></linearGradient>
    <linearGradient id="dia"><stop offset="0" stopColor="#ff2c9c" /><stop offset=".45" stopColor="#ff2210" /><stop offset="1" stopColor="#ff8a10" /></linearGradient>
    <linearGradient id="win" x1="0" y1="0" x2="1" y2="1"><stop offset="0" stopColor="#6fd6ff" /><stop offset="1" stopColor="#139cf5" /></linearGradient>
    <linearGradient id="cc" x1="0" y1="0" x2="1" y2="1"><stop offset="0" stopColor="#e8281e" /><stop offset=".3" stopColor="#f5651e" /><stop offset=".55" stopColor="#e44fd0" /><stop offset=".8" stopColor="#3aa0f5" /><stop offset="1" stopColor="#54e05a" /></linearGradient>
    <linearGradient id="sun" x1="0" y1="0" x2="1" y2="1"><stop offset="0" stopColor="#f9b13a" /><stop offset="1" stopColor="#f26a1b" /></linearGradient>
    <linearGradient id="fold" x1="0" y1="0" x2="0" y2="1"><stop offset="0" stopColor="#ffd766" /><stop offset="1" stopColor="#fbbd2c" /></linearGradient>
  </defs>
);
const apps = [
  [<>{gradients}{R(0.5, 0.5, 14, 14, 'url(#win)')}{R(15.5, 0.5, 14, 14, 'url(#win)')}{R(0.5, 15.5, 14, 14, 'url(#win)')}{R(15.5, 15.5, 14, 14, 'url(#win)')}</>],
  [<>{C(14, 13, 10.5, '#4a4f57', '#ececec', 2.6)}{P('M21.5 21.5L28 28', '#d8d8d8', 'none', 3.4)}</>],
  [<>{R(8, 1, 22, 20, '#f2f2f2', 'none', 1, 2)}{R(0, 8.5, 21.5, 20.5, '#6f6f6f', 'none', 1, 2)}{R(8, 8.5, 13.5, 12.5, '#a5a5a5')}</>],
  'copilot',
  [<>{P('M8 6V3Q8 1 10 1H20Q22 1 22 3V6', '#1fa6ea', 'none', 2)}{R(0.5, 5.5, 29, 24, '#f3f3f3', 'none', 1, 3)}{R(9, 11.5, 5.3, 5.3, '#f25022')}{R(15.5, 11.5, 5.3, 5.3, '#7fba00')}{R(9, 18, 5.3, 5.3, '#00a4ef')}{R(15.5, 18, 5.3, 5.3, '#ffb900')}</>],
  [P('M2 0.5L10 5L15 9L20 5L28 0.5V23L15 30L2 23ZM8.5 10V19L15 22.5L21.5 19V10L15 15.5Z', 'none', '#c4282e')],
  [<>{C(14, 16, 14, '#0b8fd4', '#fff', 2)}{T(14, 25, '?', '#fff', 25, { textAnchor: 'middle', fontWeight: 700 })}{C(25, 3.5, 10, '#ffbf0d')}</>],
  [<>{P('M15 0C25 0 31 8 30 14C29 20 20 20 19 17C22 11 14 8 9 12C3 17 9 28 18 28C12 32 0 28 0 15C0 6 7 0 15 0Z', 'none', 'url(#edge)')}{P('M9 12C14 8 20 12 18 16C16 22 22 26 28 22C23 31 11 30 9 22C8 18 8 15 9 12Z', 'none', '#0b5ba8')}</>],
  [P('M15 0.5L29.5 15L15 29.5L0.5 15Z', 'none', 'url(#dia)')],
  [<>{P('M0 8L4 6L23 22V29L20 29L4 14V24L0 22Z', 'none', '#8f62cf')}{P('M0 22L4 24L23 8V0L20 1L2 19Z', 'none', '#7144b4')}{P('M21 0L30 4V26L21 30Z', 'none', '#c79bf5')}</>],
  [<>{C(15, 15, 14.5, '#34a853')}{P('M2.4 7.8L9 18L15 8.5H27.8A14.5 14.5 0 0 0 2.4 7.8Z', 'none', '#ea4335')}{P('M28 8.5A14.5 14.5 0 0 1 14.5 29.5L21 18.5L21 8.5Z', 'none', '#fbbc04')}{C(15, 15, 7.2, '#fff')}{C(15, 15, 5.7, '#4285f4')}{C(26, 3.5, 9.8, '#5c6bc0')}{T(26, 8, 'y', '#fff', 13, { textAnchor: 'middle' })}</>, true],
  [<>{R(0, 0, 30, 30, '#000', 'none', 1, 5)}{P('M26 28V14A11 11 0 1 0 15 26', '#7dff2a', 'none', 2)}{P('M23 27V14A8.5 8.5 0 1 0 15 23', '#f4d41f', 'none', 1.8)}{P('M20.5 25V14A6 6 0 1 0 15 20', '#25b8f2', 'none', 1.8)}{C(14.5, 14, 4, '#000', '#f02ad0', 2)}{P('M28 28H19', '#7dff2a', 'none', 2)}</>, true],
  [<>{C(15, 15, 14, '#2ba3de')}{P('M5.5 14.5L23 7.5L20 23L14 18.5L11 21V17L19 11L9.5 16.5Z', 'none', '#fff')}</>],
  [<>{R(2, 2, 26, 26, '#9be03a')}{R(2, 2, 7, 8, '#22d88f')}{R(4.5, 4.5, 21, 21, '#0a0a0a')}{T(6, 15, 'PC', '#fff', 10.5, { fontWeight: 700 })}{R(7.5, 21, 8, 1.8, '#fff')}</>],
  [<>{P('M15 0.5C24 0.5 30 7 30 14.5C30 23 23 29 15 29Q12 29 11 28.5L6 30V26Q0 21 0 14.5C0 7 6 0.5 15 0.5Z', 'none', '#0a6cff')}{P('M6 19L12.5 12L17 16L24 11.5L17.5 19L13 15.5Z', '#fff', '#fff', 1)}</>],
  [<>{R(3, 3, 24, 25, '#eef4fb', 'none', 1, 5)}{P('M15 8L21.5 11.5V19.5L15 23L8.5 19.5V11.5Z', 'none', '#2b7be0')}{P('M12.3 18.5V14.5M15 18.5V13M17.7 17V12', '#fff', 'none', 1.5)}</>],
  [<>{P('M0 4Q0 2 2 2H10L13 5H28Q30 5 30 8V20H0Z', 'none', '#e59a10')}{P('M0 8H12L14 6H28Q30 6 30 8V26Q30 28 28 28H2Q0 28 0 26Z', 'none', 'url(#fold)')}{P('M5 28V23Q5 21 7 21H23Q25 21 25 23V28Z', 'none', '#1478c8')}{R(9, 24, 12, 1.6, '#0a4f90')}</>, true],
  [<>{C(13, 17.5, 12, '#0a4f9e', '#d6e4f2', 1)}{T(13, 23, 'hp', '#fff', 17, { textAnchor: 'middle', fontStyle: 'italic', fontWeight: 700 })}{C(22, 8, 8.3, '#e9c64c')}{T(22, 13, '!', '#222', 14, { textAnchor: 'middle', fontWeight: 700 })}</>],
  [<>{R(1.5, 1.5, 27, 27, 'url(#cc)', 'none', 1, 5)}{C(12, 16.5, 5, 'none', '#fff', 1.9)}{C(17, 14.5, 7.2, 'none', '#fff', 1.9)}{P('M12 17.5L15 14Q18 11 20.5 14', '#fff', 'none', 1.7)}</>],
  [<>{R(8, 1.5, 21.5, 7, '#41a5ee')}{R(8, 8.5, 21.5, 7, '#2b7cd3')}{R(8, 15.5, 21.5, 7, '#185abd')}{R(8, 22.5, 21.5, 6, '#103f91')}{R(0.5, 8, 14.5, 14.5, '#185abd', 'none', 1, 1.5)}{T(7.8, 20, 'W', '#fff', 12, { textAnchor: 'middle', fontWeight: 700 })}</>],
  [<>{C(15, 15, 14.5, '#1ed760')}{P('M6 10.5Q15 7.5 24.5 12', '#111', 'none', 2.8)}{P('M7 15.5Q15 13 23 17', '#111', 'none', 2.3)}{P('M8 20Q15 18 21 21.5', '#111', 'none', 2)}</>],
];

const railIcons = [
  <>{P('M4 3V19.5H23', W, 'none', 1.5)}{R(7, 7, 3, 10, 'none', W)}{R(13, 10, 3, 7, 'none', W)}{R(18.5, 4, 3, 13, 'none', W)}</>,
  <>{R(3, 2.5, 20, 18, 'none', W, 1.6)}{R(3, 2.5, 20, 3, '#8a8a8a')}{P('M3 10H23M3 15H23M9.5 5V20M16.5 5V20', W, 'none', 1.5)}</>,
  <>{R(1.5, 7, 9, 8.5, '#555', W)}{P('M2 10H10', W)}{R(14, 1, 9, 8.5, 'none', W)}{R(14, 13, 9, 8.5, '#444', W)}{P('M14 4H23M14 16.5H23M6 7V3H14M6 15V19H14', W)}</>,
  <>{P('M6 11V1H13L18 6V11M13 1V6H18M20 7V13Q20 18 17 19', W)}{T(0.5, 20, 'DAX', '#fff', 8, { fontWeight: 600 })}</>,
  <>{P('M5 11V1H13L19 6V11M13 1V6H19', W)}{T(1, 20.5, 'TMDL', '#fff', 8, { fontWeight: 700 })}</>,
];

const customers = [['CID635848', 4976], ['CID792698', 4457], ['CID825950', 4729], ['CID889014', 4685], ['CID933539', 5314]];

export default function App() {
  return (
    <Screen>
      <Global />
      <TitleBar>
        <QuickIcons>
          <svg width="20" height="20" viewBox="0 0 20 20">{P('M1 1H19V19H4L1 16ZM5 1V9H15V1M6 19V12.5H14V19M9 19V15.5', W, 'none', 1.7)}</svg>
          <svg width="18" height="20" viewBox="0 0 18 20">{P('M1 2V8H7M1 8C5 1 15 1 16 8C16 12 12 14 8 19', '#686868', 'none', 1.5)}</svg>
          <svg width="18" height="20" viewBox="0 0 18 20">{P('M17 2V8H11M17 8C13 1 3 1 2 8C2 12 6 14 10 19', '#686868', 'none', 1.5)}</svg>
        </QuickIcons>
        <FileName>OLA • Last saved: Today at 14:09</FileName>
        <svg width="12" height="10" viewBox="0 0 12 10">{P('M1 1H11L6 6.5Z', W, 'none', 1.2)}</svg>
        <TitleSpacer />
        <UserName>Yassin Ibrahim</UserName>
        <svg width="26" height="26" viewBox="0 0 26 26">{C(13, 13, 12.7, '#333')}{C(13, 7.5, 3.7, 'none', W)}{P('M6 14H20Q21 21 13 21.5Q5 21 6 14Z', W)}</svg>
        <WindowButtons>
          <svg width="14" height="16" viewBox="0 0 14 16">{P('M0 8.5H14', W)}</svg>
          <svg width="15" height="16" viewBox="0 0 15 16">{R(1, 2, 12.5, 12.5, 'none', W, 1.4, 1.5)}</svg>
          <svg width="15" height="16" viewBox="0 0 15 16">{P('M1 2L14 15M14 2L1 15', W)}</svg>
        </WindowButtons>
      </TitleBar>
      <MenuBar>
        <MenuItem $w={26} $gap={42}>File</MenuItem>
        <MenuItem $w={48} $gap={29} $on>Home</MenuItem>
        <MenuItem $w={43} $gap={30}>Insert</MenuItem>
        <MenuItem $w={74} $gap={30}>Modeling</MenuItem>
        <MenuItem $w={37} $gap={28}>View</MenuItem>
        <MenuItem $w={71} $gap={29}>Optimize</MenuItem>
        <MenuItem $w={36} $gap={0}>Help</MenuItem>
        <ShareButton>
          <svg width="21" height="20" viewBox="0 0 21 20">{P('M6 6H1.5V18.5H16V14M5 14C6 8 9 6 13 6V2L20 8L13 13.5V10C9 10 7 11 5 14Z', '#b9d3ce', 'none', 1.4)}</svg>
          <span>Share</span>
          <Caret c="#b9d3ce" s={15} />
        </ShareButton>
      </MenuBar>

      <Ribbon>
        <Group $w={201}>
          <GroupRow $pl={13}>
            <RibbonButton $w={44} $dim>
              <svg width="44" height="40" viewBox="0 0 44 40">{P('M16 36H9V7H16M30 7H35V16', OR, 'none', 3)}{P('M15 10V6H19Q19 2.5 22 2.5T26 6H30V10Z', W, 'none', 1.6)}{R(25, 17, 17, 22, '#292929', W, 1.6)}</svg>
              <ButtonText><Line>Paste</Line></ButtonText>
            </RibbonButton>
            <ClipList>
              <ClipItem $mt={-6}>
                <svg width="20" height="22" viewBox="0 0 20 22">{P('M5 1L12 16M14 1L7 16', '#777')}{C(5.5, 17.5, 2.6, 'none', '#3a6284')}{C(13.5, 17.5, 2.6, 'none', '#3a6284')}</svg>Cut
              </ClipItem>
              <ClipItem $mt={1}>
                <svg width="20" height="20" viewBox="0 0 20 20">{P('M7 17H1V1H7L10 4M8 6H14L19 10V19H8ZM14 6V10H19M10.5 13H16.5M10.5 16H16.5', '#777')}</svg>Copy
              </ClipItem>
              <ClipItem>
                <svg width="20" height="20" viewBox="0 0 20 20">{P('M2 9L10 18L14 13L6 7Z', '#8a6a35', '#8a6a35')}{P('M8 6L15 12L17 9L14 7L19 2L17 0L12 5L10 4Z', '#777')}</svg>Format painter
              </ClipItem>
            </ClipList>
          </GroupRow>
          <GroupLabel>Clipboard</GroupLabel>
        </Group>
        <Group $w={448.5}>
          <GroupRow $pl={5}>
            <RButton w={59.5} icon="get" a="Get" b="data" caret />
            <RButton w={60.5} icon="excel" a="Excel" b="workbook" />
            <RButton w={78} icon="lake" a="OneLake" b="catalog" caret />
            <RButton w={40} icon="sql" a="SQL" b="Server" />
            <RButton w={61} icon="enter" a="Enter" b="data" />
            <RButton w={59} icon="dv" a="Dataverse" />
            <RButton w={79} icon="recent" a="Recent" b="sources" caret />
          </GroupRow>
          <GroupLabel>Data</GroupLabel>
        </Group>
        <Group $w={145.5}>
          <GroupRow $pl={9}>
            <RButton w={72.5} icon="transform" a="Transform" b="data" caret />
            <RButton w={53} icon="refresh" a="Refresh" caret />
          </GroupRow>
          <GroupLabel>Queries</GroupLabel>
        </Group>
        <Group $w={183}>
          <GroupRow $pl={8}>
            <RButton w={53} icon="newVisual" a="New" b="visual" />
            <RButton w={47} icon="textBox" a="Text" b="box" />
            <RButton w={65} icon="more" a="More" b="visuals" caret />
          </GroupRow>
          <GroupLabel>Insert</GroupLabel>
        </Group>
        <Group $w={232.5}>
          <GroupRow $pl={10}>
            <RButton w={88} icon="calc" a="New visual" b="calculation" caret dim />
            <RButton w={67} icon="measure" a="New" b="measure" />
            <RButton w={55} icon="quick" a="Quick" b="measure" />
          </GroupRow>
          <GroupLabel>Calculations</GroupLabel>
        </Group>
        <Group $w={92}>
          <GroupRow>
            <RButton w={92} icon="sens" a="Sensitivity" caret dim />
          </GroupRow>
          <GroupLabel>Sensitivity</GroupLabel>
        </Group>
        <Group $w={74}>
          <GroupRow>
            <RButton w={74} icon="publish" a="Publish" />
          </GroupRow>
          <GroupLabel>Share</GroupLabel>
        </Group>
        <Group $w={164}>
          <GroupRow $pl={9}>
            <RButton w={93} icon="prep" a="Prep data for" b="AI" />
            <RButton w={51} icon="copilot" a="Copilot" />
          </GroupRow>
          <GroupLabel>Copilot</GroupLabel>
        </Group>
        <Collapse><Caret up s={12} /></Collapse>
      </Ribbon>

      <Main>
        <Rail>
          {railIcons.map((ic, i) => (
            <RailItem key={i} $on={i === 0}><svg width="25" height="23" viewBox="0 0 25 23">{ic}</svg></RailItem>
          ))}
        </Rail>
        <Center>
          <Work>
            <Canvas>
              <Page>
                <Nav>
                  <LogoRow>
                    <Medallion />
                    <LogoText aria-label="OLA">OLΛ</LogoText>
                  </LogoRow>
                  <NavItem $h={94}>
                    <svg width="113" height="94" viewBox="52 304 113 94">
                      {P('M88 326V375H136', N, 'none', 4.5)}
                      {[[130.3, 333], [130.3, 344], [120, 344], [110.7, 347], [110.7, 357], [100.3, 355.6], [97.3, 365]].map(([x, y], i) => <circle key={i} cx={x} cy={y} r="3" fill={N} />)}
                    </svg>
                    <NavText $mt={-2} $ls={0.6}>Overall</NavText>
                  </NavItem>
                  <NavItem $h={125}>
                    <svg width="119" height="125" viewBox="52 398 119 125"><Car /></svg>
                    <NavText $mt={-11} $ls={0.35}>Vehicle Type</NavText>
                  </NavItem>
                  <NavItem $h={84} $on>
                    <svg width="118" height="80" viewBox="53 525 118 80">{P('M96 545H127.5M96 554.8H127.5M96 545H104C120 545 120 564.5 104 564.5H97L117 586', '#fff', 'none', 3.2)}</svg>
                    <NavText $mt={-11} $ls={0.6}>Revenue</NavText>
                  </NavItem>
                  <NavItem $h={106}>
                    <svg width="113" height="106" viewBox="52 607 113 106">
                      <g transform="translate(111.2 680) rotate(7.5) scale(.86 .88) translate(-119.25 -471)"><Car /></g>
                      {P('M77.5 690H158M146 641V690', N, 'none', 3.2)}
                      {P('M140 628L146 625L152 628L149 640H143Z', N, 'none', 2.6)}
                      {P('M133 672L136 668L138 672L141 667L143 672H146V684H139Z', 'none', N)}
                    </svg>
                    <NavText $mt={15} $ls={1}>Cancellation</NavText>
                  </NavItem>
                  <NavItem $h={144}>
                    <svg width="119" height="144" viewBox="52 713 119 144">
                      {R(80, 757, 62, 44, N, 'none', 1, 3)}{P('M117 800H130V813Z', 'none', N)}
                      {P('M111 763.5L114.3 774.3H125.5L116.5 781L120 792L111 785.3L102 792L105.5 781L96.5 774.3H107.7Z', 'none', '#262626')}
                    </svg>
                    <NavText $mt={-15} $ls={0.9}>Ratings</NavText>
                  </NavItem>
                </Nav>
                <Report>
                  <TopRow>
                    <Card $w={588} $h={288} $mt={1}><PaymentChart /></Card>
                    <SideCol>
                      <Card $w={247} $h={96} $dark>
                        <DateTitle>Date</DateTitle>
                        <DateInputs>
                          {['01/07/2024', '31/07/2024'].map(d => (
                            <DateInput key={d}>{d}
                              <svg width="10" height="10" viewBox="0 0 10 10">{R(1, 1, 8, 8, 'none', W, 1.2, 2)}{P('M1 3.3H9M3 5.3H7M3 7H7', W, 'none', 1)}</svg>
                            </DateInput>
                          ))}
                        </DateInputs>
                        <Slider><Knob /><Track /><Knob /></Slider>
                      </Card>
                      <Card $w={247} $h={183}>
                        <TableTitle>Top Customers by Booking Value</TableTitle>
                        <Grid>
                          <GridHead><span>Customer_ID</span><span>Sum of Booking_Value</span></GridHead>
                          {customers.map(([a, b], i) => (
                            <GridRow key={a} $alt={i % 2 === 1}><span>{a}</span><span>{b}</span></GridRow>
                          ))}
                          <GridTotal><span>Total</span><span>24161</span></GridTotal>
                        </Grid>
                      </Card>
                    </SideCol>
                  </TopRow>
                  <Card $w={847} $h={323}><DateChart /></Card>
                </Report>
              </Page>
            </Canvas>
            <FilterPane>
              <PaneHead $l={17} $r={15}>
                <svg width="28" height="20" viewBox="0 0 28 20">{P('M0 3.5H16M3 8.5H13M6 13.5H10', '#252423', 'none', 1.6)}</svg>
                <PaneTitle>Filters</PaneTitle>
                <HeadIcons>
                  <svg width="38" height="12" viewBox="0 0 38 12">{P('M1 6Q6 -1 12 6', '#555', 'none', 1.3)}{C(6.5, 7, 1.9, 'none', '#222', 1.6)}</svg>
                  <Chevrons c="#252423" />
                </HeadIcons>
              </PaneHead>
              <FilterSearch><Magnifier c="#333" />Search</FilterSearch>
              <FilterRule />
              <FilterLabel $mt={21}><span>Filters on this page</span><span>...</span></FilterLabel>
              <FilterDrop>Add data fields here</FilterDrop>
              <FilterLabel $mt={33}><span>Filters on all pages</span><span>...</span></FilterLabel>
              <FilterDrop>Add data fields here</FilterDrop>
            </FilterPane>
          </Work>
          <TabBar>
            <ViewIcons>
              <ViewIcon $on $mr={24} $pt={1}>
                <svg width="20" height="20" viewBox="0 0 20 20">{R(1.5, 1, 17, 14, 'none', '#fff', 2, 2)}{P('M6 18.5H14M7.5 15V18M12.5 15V18', '#fff', 'none', 1.8)}</svg>
              </ViewIcon>
              <ViewIcon $mr={22} $pt={2}>
                <svg width="13" height="24" viewBox="0 0 13 24">{R(1.2, 1.2, 10.6, 21, 'none', '#fff', 1.8, 1.5)}{P('M4.5 19.5H8.5', '#fff')}</svg>
              </ViewIcon>
              <ViewIcon $pt={5}>
                <svg width="34" height="12" viewBox="0 0 34 12">{P('M6 1V11L1 6ZM28 1V11L33 6Z', '#b8b8b8', 'none', 1.2)}</svg>
              </ViewIcon>
            </ViewIcons>
            <Tab $w={96.5}>Overall</Tab>
            <Tab $w={133}>Vehicle Type</Tab>
            <Tab $w={109} $on>Revenue<TabClose>x</TabClose></Tab>
            <Tab $w={132}>Cancellation</Tab>
            <Tab $w={100.5}>Ratings</Tab>
            <AddTab><svg width="14" height="14" viewBox="0 0 14 14">{P('M7 0V14M0 7H14', '#222', 'none', 3)}</svg></AddTab>
          </TabBar>
        </Center>
        <VizPane>
          <PaneHead $l={10} $r={12}><PaneTitle $ls={0.15}>Visualizations</PaneTitle><Chevrons /></PaneHead>
          <BuildWrap>
            <BuildLabel>Build visual</BuildLabel>
            <BuildTabs>
              <BuildTab $on>
                <svg width="32" height="32" viewBox="0 0 32 32">{P('M1 1.5H25', W, 'none', 1.4)}{R(2, 8, 28, 8, TEAL)}{R(2, 21, 28, 8, TEAL)}<rect x="1.5" y="7.5" width="29" height="9" fill="none" stroke="#d8d8d8" strokeDasharray="2 2" /><rect x="1.5" y="20.5" width="29" height="9" fill="none" stroke="#d8d8d8" strokeDasharray="2 2" /></svg>
              </BuildTab>
              <BuildTab>
                <svg width="31" height="32" viewBox="0 0 31 32">{P('M6 30H1V1H15L21 8V12', '#c0c0c0', 'none', 1.4)}{P('M13 2L20 10H13Z', 'none', '#fff')}{P('M30 11L18 22L21 25ZM18 22Q13 22 13 26Q12 29 8 30Q19 32 21 25', '#c0c0c0', 'none', 1.4)}</svg>
              </BuildTab>
            </BuildTabs>
          </BuildWrap>
          <svg width="225" height="10" viewBox="0 0 225 10">{P('M0 9.5H20L30 0.7L40 9.5H225', '#777', 'none', 1)}</svg>
          <VizGrid>
            {gallery.map((g, i) => <svg key={i} width="23" height="23" viewBox="0 0 23 23" overflow="visible">{g}</svg>)}
          </VizGrid>
          <Rule />
          <FieldLabel $mt={11}>Values</FieldLabel>
          <FieldWell $h={35} $mt={7} $pl={13}>Add data fields here</FieldWell>
          <FieldLabel $mt={13} $b>Drill through</FieldLabel>
          <ToggleRow $mt={12}>Cross-report<Toggle>Off</Toggle></ToggleRow>
          <ToggleRow $mt={13}>Keep all filters<Toggle>Off</Toggle></ToggleRow>
          <FieldWell $h={32} $mt={13} $pl={10} $black>Add drill-through fields here</FieldWell>
        </VizPane>
        <DataPane>
          <PaneHead $l={10} $r={10}><PaneTitle $ls={0.1}>Data</PaneTitle><Chevrons /></PaneHead>
          <DataSearch><Magnifier c="#a8a8a8" s={19} />Search</DataSearch>
          <TreeItem>
            <svg width="7" height="11" viewBox="0 0 7 11">{P('M1 1L6 5.5L1 10', W)}</svg>
            <svg width="16" height="16" viewBox="0 0 16 16">{R(1, 1, 14, 14, 'none', W, 1.4, 3)}{P('M5.5 1V15M10.5 1V15M1 5.5H15M1 10.5H15', W, 'none', 1.3)}</svg>
            July
          </TreeItem>
        </DataPane>
      </Main>

      <StatusBar>
        <span>Page 3 of 5</span>
        <StatusSpacer />
        <svg width="155" height="17" viewBox="0 0 155 17">{P('M0 7.5H6M144 7.5H154M149 2.5V12.5', '#e6e6e6', 'none', 2)}{P('M12 8H137M74.5 4V12', W, 'none', 1)}{R(53, 1, 5, 13, '#d6d6d6')}</svg>
        <Percent>73%</Percent>
        <svg width="19" height="14" viewBox="0 0 19 14">{R(1, 1, 17, 12, 'none', W, 1.5, 2)}{P('M7 4H4.5V6M4.5 8V10H7M12 4H14.5V6M14.5 8V10H12', W, 'none', 1.4)}</svg>
      </StatusBar>
      <TopEdge />
      <Taskbar>
        <Widgets>
          <svg width="34" height="38" viewBox="0 0 34 38">{C(15, 21, 12.5, 'url(#sun)')}{C(23.5, 10, 9.8, '#c42b1c')}{T(23.5, 14.5, '3', '#fff', 12.5, { textAnchor: 'middle' })}</svg>
        </Widgets>
        {apps.map((a, i) => (
          <AppCell key={i}>
            {a === 'copilot' ? <Copilot id="tb" w={34} h={31} /> : <svg width="30" height="30" viewBox="0 0 30 30" overflow="visible">{a[0]}</svg>}
            {a[1] === true && <RunningDot />}
          </AppCell>
        ))}
        <ActiveArea>
          <ActiveApp>
            <svg width="26" height="32" viewBox="0 0 26 32">{R(14, 1, 10.5, 30, '#c88716', 'none', 1, 1)}{R(14, 1, 10.5, 14, '#e0a21a', 'none', 1, 1)}{R(7.5, 8, 10, 23, '#efc02e', 'none', 1, 1)}{R(1, 16, 10, 15, '#fbdf6c', 'none', 1, 1)}</svg>
          </ActiveApp>
          <svg width="22" height="6" viewBox="0 0 22 6">{C(3, 3, 2.2, '#fff')}{C(11, 3, 2.2, '#fff')}{C(19, 3, 2.2, '#fff')}</svg>
        </ActiveArea>
        <Tray>
          <TrayIcon $w={16} $mr={22}><svg width="16" height="14" viewBox="0 0 16 14">{P('M2 10L8 4L14 10', '#fff', 'none', 2)}</svg></TrayIcon>
          <TrayIcon $w={22} $mr={18}><svg width="22" height="18" viewBox="0 0 22 18">{C(6, 9, 5, '#d0d0d0')}{C(11, 6, 5, '#8b8b8b')}{C(14, 12, 5.5, '#ffe600')}{P('M14 8.5V12.5M14 14V15.5', '#222', 'none', 1.5)}</svg></TrayIcon>
          <TrayIcon $w={22} $mr={18}><svg width="22" height="16" viewBox="0 0 22 16">{C(8, 7, 6, '#0f6cbd')}{C(13, 7, 5, '#1b84d8')}{R(1, 7, 20, 8, '#28a8ea', 'none', 1, 4)}{P('M1 11Q2 6 8 8L17 14.5H5Q1 14.5 1 11Z', 'none', '#1490df')}</svg></TrayIcon>
          <TrayIcon $w={22} $mr={22}><svg width="22" height="24" viewBox="0 0 22 24">{P('M2 10C4 1 15 0 19 7M19 1V7.5H13M2 22V16H8M2 16Q4 21 9 22', '#fff', 'none', 1.4)}{C(15.5, 16.5, 5, '#f00')}</svg></TrayIcon>
          <Lang>ENG</Lang>
          <TrayIcon $w={20} $mr={10}><svg width="20" height="16" viewBox="0 0 20 16">{P('M1 6Q10 -3 19 6M3.5 9Q10 2 16.5 9M6.5 11.5Q10 8 13.5 11.5', '#fff', 'none', 1.6)}{C(10, 14, 1.6, '#fff')}</svg></TrayIcon>
          <TrayIcon $w={20} $mr={10}><svg width="20" height="18" viewBox="0 0 20 18">{P('M1 6.5H4L9 2V16L4 11.5H1ZM12 6Q14 9 12 12M14.5 4Q18 9 14.5 14M16.5 1.5Q22 9 16.5 16.5', '#fff', 'none', 1.4)}</svg></TrayIcon>
          <TrayIcon $w={20} $mr={0}><svg width="20" height="22" viewBox="0 0 20 22">{R(1, 5, 15, 11, 'none', '#fff', 1.5, 3)}{R(3, 9, 9, 5.5, '#fff')}{P('M18 8.5V13', '#fff', 'none', 2)}{P('M9 0L5 8H9L8 13L13 5H9.5L11 0Z', '#1e2a21', '#fff', 1)}</svg></TrayIcon>
          <Clock>14:18<br />07/10/2025</Clock>
        </Tray>
      </Taskbar>
    </Screen>
  );
}
